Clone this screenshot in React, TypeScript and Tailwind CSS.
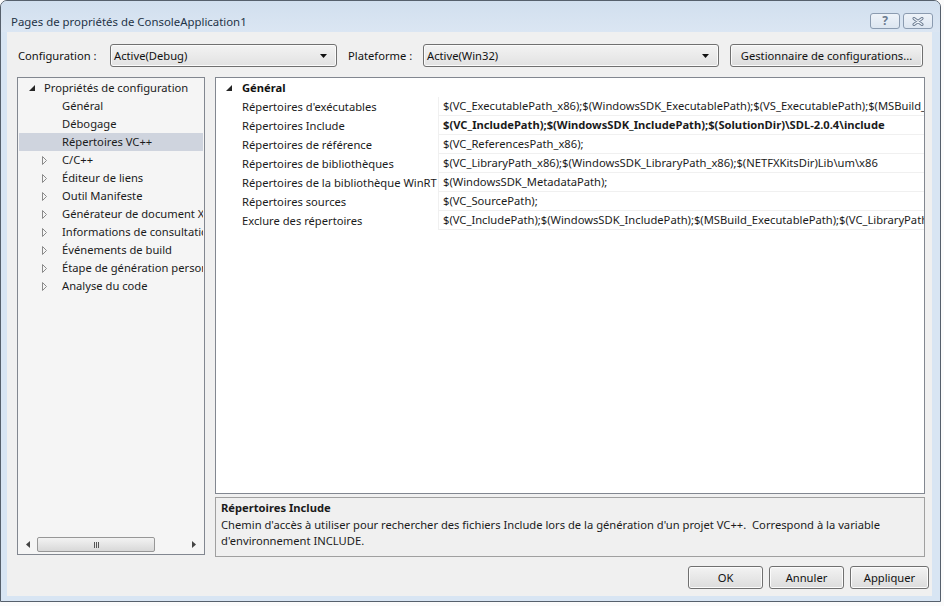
import React from 'react'

type TreeItem = { label: string; level: 0 | 1; state?: 'open' | 'closed'; selected?: boolean }

const treeItems: TreeItem[] = [
  { label: 'Propriétés de configuration', level: 0, state: 'open' },
  { label: 'Général', level: 1 },
  { label: 'Débogage', level: 1 },
  { label: 'Répertoires VC++', level: 1, selected: true },
  { label: 'C/C++', level: 1, state: 'closed' },
  { label: 'Éditeur de liens', level: 1, state: 'closed' },
  { label: 'Outil Manifeste', level: 1, state: 'closed' },
  { label: 'Générateur de document XML', level: 1, state: 'closed' },
  { label: 'Informations de consultation', level: 1, state: 'closed' },
  { label: 'Événements de build', level: 1, state: 'closed' },
  { label: 'Étape de génération personnalisée', level: 1, state: 'closed' },
  { label: 'Analyse du code', level: 1, state: 'closed' },
]

const props = [
  { name: "Répertoires d'exécutables", value: '$(VC_ExecutablePath_x86);$(WindowsSDK_ExecutablePath);$(VS_ExecutablePath);$(MSBuild_ExecutablePath);$(SystemRoot)\\SysWow64;$(FxCopDir);$(PATH);' },
  { name: 'Répertoires Include', value: '$(VC_IncludePath);$(WindowsSDK_IncludePath);$(SolutionDir)\\SDL-2.0.4\\include', bold: true },
  { name: 'Répertoires de référence', value: '$(VC_ReferencesPath_x86);' },
  { name: 'Répertoires de bibliothèques', value: '$(VC_LibraryPath_x86);$(WindowsSDK_LibraryPath_x86);$(NETFXKitsDir)Lib\\um\\x86' },
  { name: 'Répertoires de la bibliothèque WinRT', value: '$(WindowsSDK_MetadataPath);' },
  { name: 'Répertoires sources', value: '$(VC_SourcePath);' },
  { name: 'Exclure des répertoires', value: '$(VC_IncludePath);$(WindowsSDK_IncludePath);$(MSBuild_ExecutablePath);$(VC_LibraryPath_x86);' },
]

const OpenArrow = () => (
  <svg width="6" height="6" viewBox="0 0 6 6">
    <polygon points="6,0 6,6 0,6" fill="#262626" />
  </svg>
)

const ClosedArrow = () => (
  <svg width="5" height="9" viewBox="0 0 5 9">
    <polygon points="0.5,0.5 4.5,4.5 0.5,8.5" fill="none" stroke="#8a8a8a" strokeWidth="1" />
  </svg>
)

const DownArrow = () => (
  <svg width="7" height="4" viewBox="0 0 7 4">
    <polygon points="0,0 7,0 3.5,4" fill="#111" />
  </svg>
)

const Combo = ({ value, width }: { value: string; width: string }) => (
  <div className={`${width} h-[23px] rounded-[3px] border border-[#707070] bg-gradient-to-b from-[#f3f3f3] to-[#e2e2e2] shadow-[inset_0_0_0_1px_#fbfbfb] flex items-center pl-[3px] pr-[9px]`}>
    <span className="flex-1 text-[#111]">{value}</span>
    <DownArrow />
  </div>
)

const Button = ({ label, className }: { label: string; className: string }) => (
  <div className={`${className} h-[23px] rounded-[3px] border border-[#707070] bg-gradient-to-b from-[#f3f3f3] to-[#dcdcdc] shadow-[inset_0_0_0_1px_#fbfbfb] flex items-center justify-center text-[#111]`}>
    {label}
  </div>
)

export default function App() {
  return (
    <div className="w-[944px] h-[606px] bg-[#fbfbfb] overflow-hidden font-['Segoe_UI','Noto_Sans',sans-serif] text-[11.2px] leading-[16px]">
      <div className="w-[941px] h-[602px] border border-[#56606c] rounded-t-[7px] bg-[#d8e5f3] flex flex-col">
        {/* Title bar */}
        <div className="h-[31px] flex bg-gradient-to-b from-[#d1dfee] to-[#dbe6f3] rounded-t-[6px]">
          <div className="pl-[10px] pt-[13px] text-[11.4px] text-[#1f3347]">Pages de propriétés de ConsoleApplication1</div>
          <div className="ml-auto flex gap-[3px] pt-[12px] pr-[7px]">
            <div className="w-[30px] h-[16px] rounded-[3px] border border-[#8b9bb0] bg-gradient-to-b from-[#eef3f9] to-[#dde6f1] flex items-center justify-center">
              <span className="text-[12px] font-bold leading-none text-[#6b7b90]">?</span>
            </div>
            <div className="w-[30px] h-[16px] rounded-[3px] border border-[#8b9bb0] bg-gradient-to-b from-[#eef3f9] to-[#dde6f1] flex items-center justify-center">
              <svg width="12" height="9" viewBox="0 0 12 9">
                <path d="M2 1.5 L10 7.5 M10 1.5 L2 7.5" stroke="#6a7a8f" strokeWidth="3" strokeLinecap="round" />
                <path d="M2 1.5 L10 7.5 M10 1.5 L2 7.5" stroke="#eef3f9" strokeWidth="1.2" strokeLinecap="round" />
              </svg>
            </div>
          </div>
        </div>

        {/* Client area */}
        <div className="ml-[6px] mr-[8px] mb-[5px] flex-1 bg-[#f0f0f0] flex flex-col pl-[10px]">
          {/* Toolbar */}
          <div className="mt-[12px] h-[23px] flex items-center">
            <span className="w-[93px] pl-[1px] text-[#111]">Configuration :</span>
            <Combo value="Active(Debug)" width="w-[227px]" />
            <span className="w-[86px] pl-[11px] text-[#111]">Plateforme :</span>
            <Combo value="Active(Win32)" width="w-[296px]" />
            <Button label="Gestionnaire de configurations..." className="ml-[11px] w-[193px]" />
          </div>

          {/* Main area */}
          <div className="mt-[10px] flex gap-[10px]">
            {/* Tree */}
            <div className="w-[188px] h-[478px] border border-[#828790] bg-[#f5f5f5] flex flex-col">
              <div className="flex-1 pt-[1px] overflow-hidden">
                {treeItems.map((it) => (
                  <div
                    key={it.label}
                    className={`h-[18px] mx-[1px] flex items-center whitespace-nowrap overflow-hidden ${it.selected ? 'bg-[#cfd4de]' : ''}`}
                  >
                    <div className={`${it.level === 0 ? 'w-[25px] pl-[10px]' : 'w-[43px] pl-[23px]'} flex items-center shrink-0`}>
                      {it.state === 'open' && <OpenArrow />}
                      {it.state === 'closed' && <ClosedArrow />}
                    </div>
                    <span className="text-[#1b1b1b]">{it.label}</span>
                  </div>
                ))}
              </div>
              {/* Horizontal scrollbar */}
              <div className="h-[17px] mb-[1px] flex items-center">
                <div className="w-[19px] flex justify-center">
                  <svg width="4" height="7" viewBox="0 0 4 7"><polygon points="4,0 4,7 0,3.5" fill="#444" /></svg>
                </div>
                <div className="w-[118px] h-[15px] rounded-[2px] border border-[#979797] bg-gradient-to-b from-[#f3f3f3] to-[#d8d8d8] flex items-center justify-center">
                  <div className="flex gap-[1px]">
                    <div className="w-[1px] h-[6px] bg-[#555]" />
                    <div className="w-[1px] h-[6px] bg-[#555]" />
                    <div className="w-[1px] h-[6px] bg-[#555]" />
                  </div>
                </div>
                <div className="flex-1 flex justify-end pr-[8px]">
                  <svg width="4" height="7" viewBox="0 0 4 7"><polygon points="0,0 0,7 4,3.5" fill="#444" /></svg>
                </div>
              </div>
            </div>

            {/* Property grid + description */}
            <div className="w-[710px] flex flex-col gap-[3px]">
              <div className="h-[417px] border border-[#828790] bg-white overflow-hidden">
                <div className="h-[18px] mt-[1px] flex items-center">
                  <div className="w-[22px] flex justify-end pr-[6px]">
                    <OpenArrow />
                  </div>
                  <span className="pl-[4px] font-bold text-[#111]">Général</span>
                </div>
                {props.map((p) => (
                  <div key={p.name} className="h-[19px] flex">
                    <div className="w-[22px] shrink-0" />
                    <div className="w-[201px] shrink-0 pl-[4px] flex items-center border-r border-[#f0f0f0] whitespace-nowrap overflow-hidden text-[#1b1b1b]">
                      {p.name}
                    </div>
                    <div className={`flex-1 pl-[4px] flex items-center border-b border-[#f0f0f0] whitespace-nowrap overflow-hidden text-[#1b1b1b] ${p.bold ? 'font-bold' : ''}`}>
                      {p.value}
                    </div>
                  </div>
                ))}
              </div>
              <div className="h-[60px] border border-[#a0a0a0] bg-[#f0f0f0] pl-[5px] pt-[2px] text-[#1b1b1b]">
                <div className="font-bold">Répertoires Include</div>
                <div className="mt-[1px]">
                  Chemin d'accès à utiliser pour rechercher des fichiers Include lors de la génération d'un projet VC++.&nbsp; Correspond à la variable
                  <br />
                  d'environnement INCLUDE.
                </div>
              </div>
            </div>
          </div>

          {/* Buttons */}
          <div className="mt-[9px] flex justify-end gap-[6px] pr-[3px]">
            <Button label="OK" className="w-[75px]" />
            <Button label="Annuler" className="w-[75px]" />
            <Button label="Appliquer" className="w-[79px]" />
          </div>
        </div>
      </div>
    </div>
  )
}
